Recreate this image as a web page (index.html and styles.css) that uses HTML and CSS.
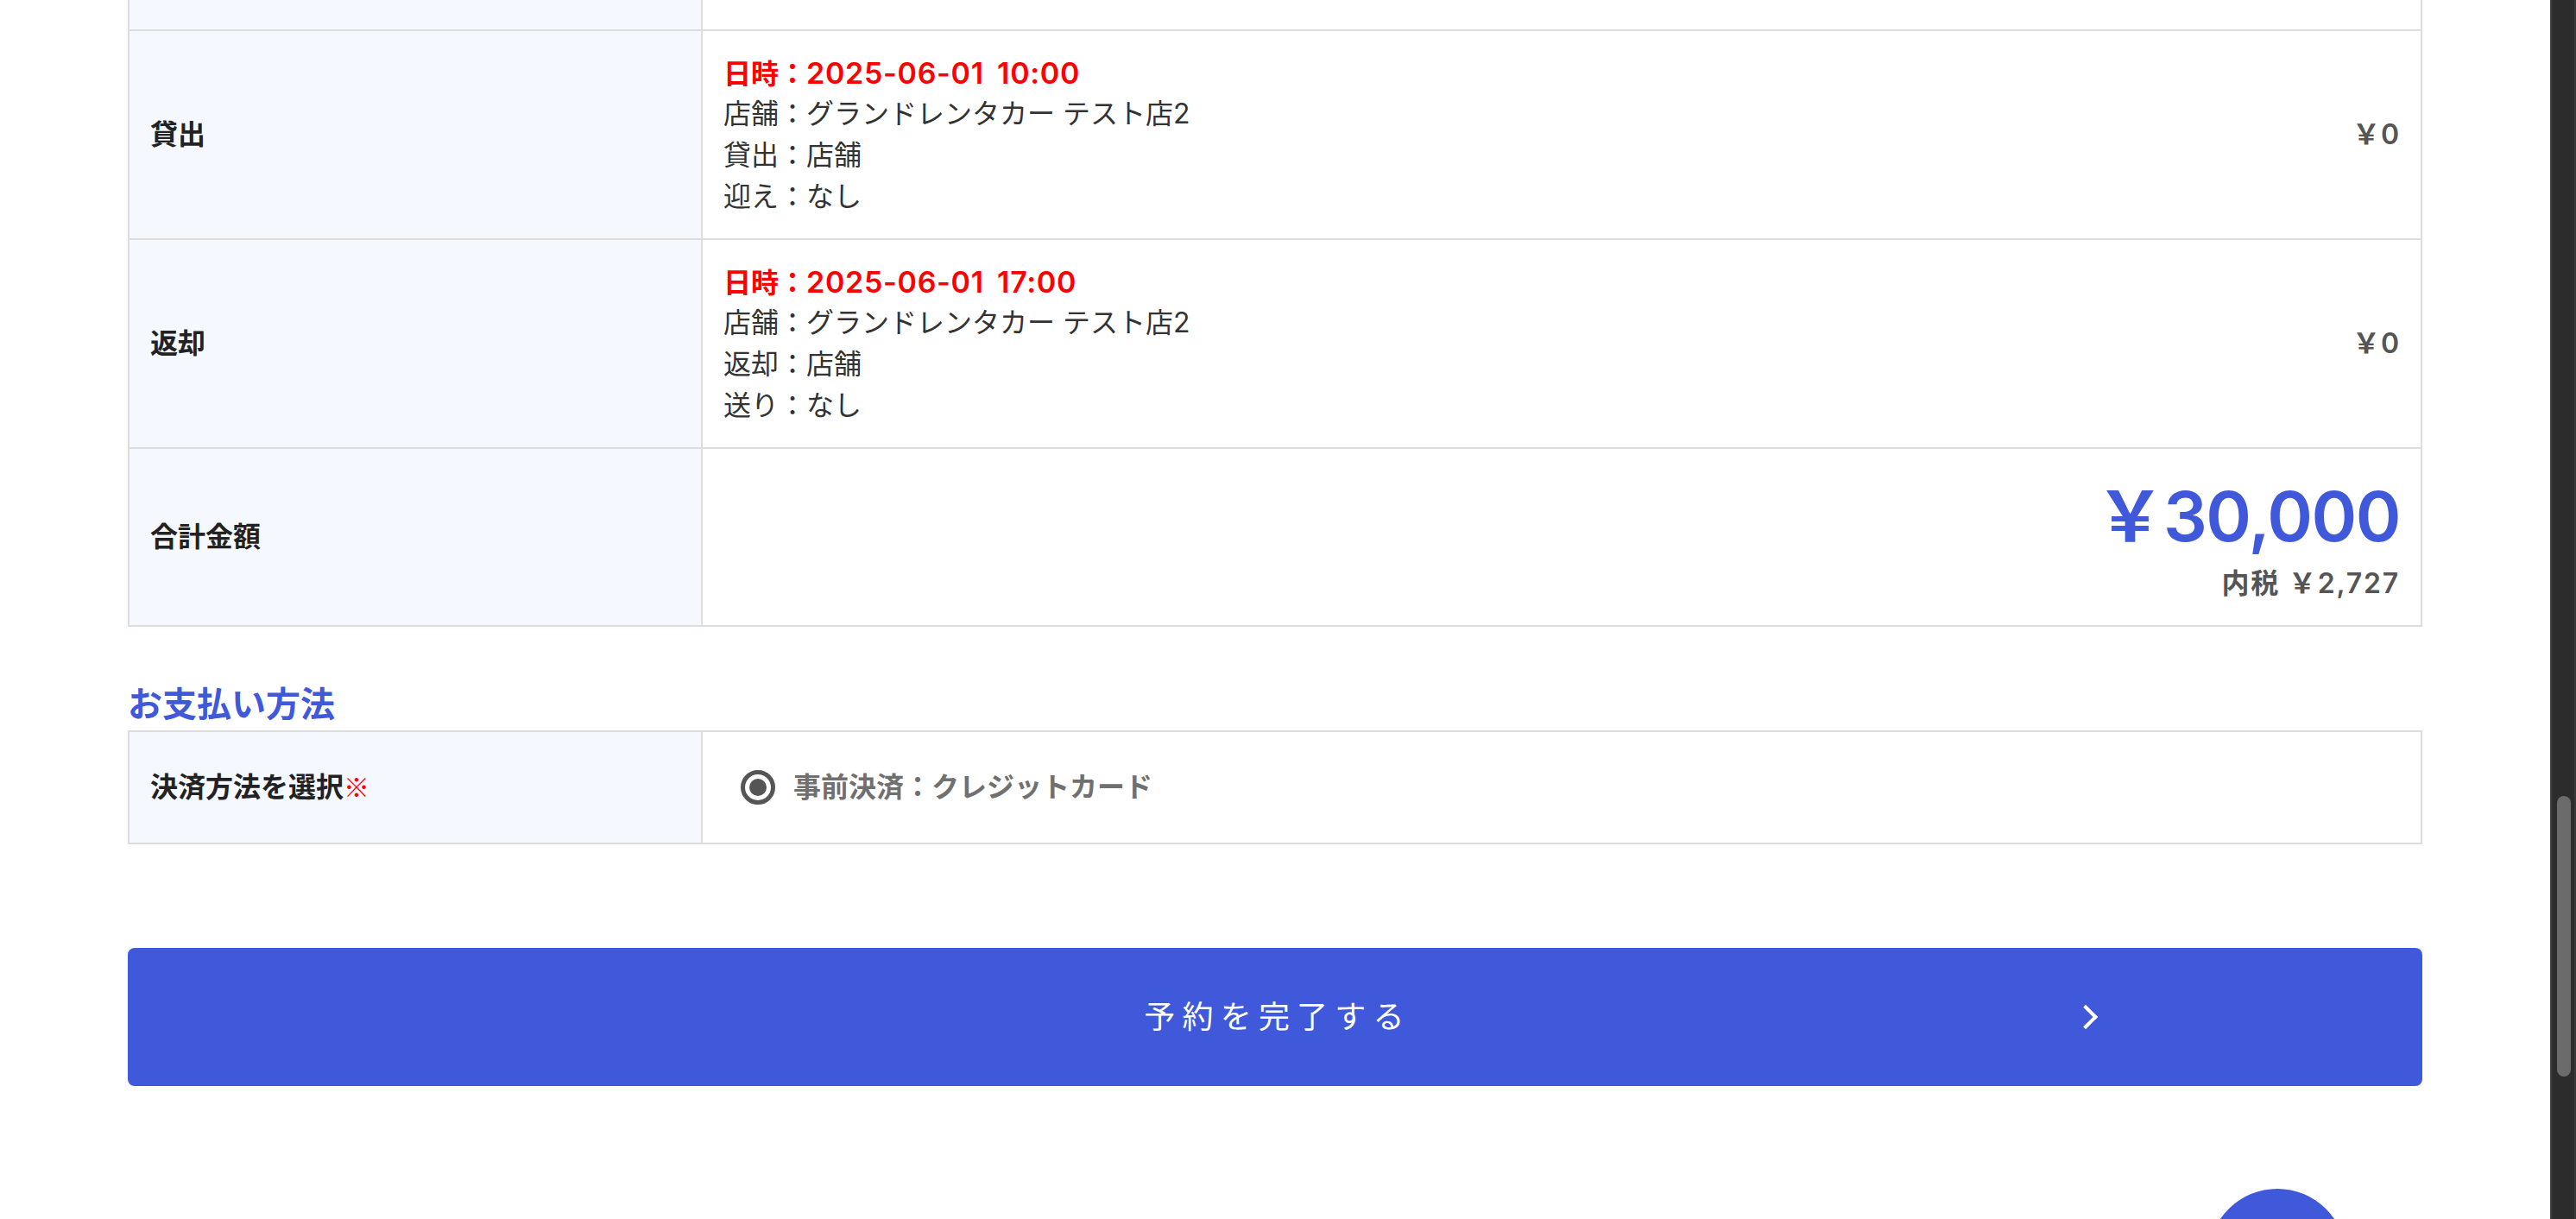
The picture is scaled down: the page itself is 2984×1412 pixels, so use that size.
FILE: index.html
```html
<!DOCTYPE html>
<html lang="ja">

<head>
    <meta charset="UTF-8">
    <meta name="viewport" content="width=device-width, initial-scale=1.0">
    <title>予約内容の確認</title>
    <link rel="stylesheet" href="styles.css">
</head>

<body>
    <main class="page">
        <table class="detail-table detail-table-top">
            <tr class="row-cut">
                <th>基本料金</th>
                <td class="amount">￥30,000</td>
            </tr>
            <tr>
                <th>貸出</th>
                <td>
                    <div class="cell-split">
                        <div>
                            <p class="date">日時：<span class="date-value">2025-06-01 10:00</span></p>
                            <p>店舗：グランドレンタカー テスト店2</p>
                            <p>貸出：店舗</p>
                            <p>迎え：なし</p>
                        </div>
                        <span class="price">￥0</span>
                    </div>
                </td>
            </tr>
            <tr>
                <th>返却</th>
                <td>
                    <div class="cell-split">
                        <div>
                            <p class="date">日時：<span class="date-value">2025-06-01 17:00</span></p>
                            <p>店舗：グランドレンタカー テスト店2</p>
                            <p>返却：店舗</p>
                            <p>送り：なし</p>
                        </div>
                        <span class="price">￥0</span>
                    </div>
                </td>
            </tr>
            <tr>
                <th>合計金額</th>
                <td class="amount">
                    <p class="total">￥30,000</p>
                    <p class="tax">内税 ￥2,727</p>
                </td>
            </tr>
        </table>

        <h2 class="section-title">お支払い方法</h2>
        <table class="detail-table">
            <tr>
                <th>決済方法を選択<span class="required">※</span></th>
                <td class="pay-cell">
                    <label class="radio-label">
                        <span class="radio"></span>
                        事前決済：クレジットカード
                    </label>
                </td>
            </tr>
        </table>

        <a class="submit-btn" href="#">予約を完了する<span class="chevron"></span></a>
    </main>

    <div class="scrollbar">
        <div class="scrollbar-thumb"></div>
    </div>

    <div class="float-btn"></div>
</body>

</html>
```

FILE: styles.css
```css
* {
    box-sizing: border-box;
}

body {
    margin: 0;
    height: 1412px;
    overflow: hidden;
    display: flex;
    background-color: #fff;
    color: #333;
    font-family: Inter, "Noto Sans CJK JP", sans-serif;
    font-size: 32px;
    line-height: 48px;
}

p {
    margin: 0;
}

.page {
    flex: 1;
    padding: 0 148px;
}

.detail-table {
    width: 100%;
    border-collapse: collapse;
    table-layout: fixed;
}

.detail-table-top {
    margin-top: -64px;
}

.detail-table th,
.detail-table td {
    border: 2px solid #ddd;
    padding: 24px;
}

.detail-table th {
    width: 25%;
    background-color: #f5f8ff;
    color: #222;
    font-weight: 700;
    text-align: left;
}

.detail-table .row-cut th,
.detail-table .row-cut td {
    height: 98px;
    padding: 21px 24px 27px;
    color: #555;
}

.cell-split {
    display: flex;
    justify-content: space-between;
    align-items: center;
}

.date {
    height: 48px;
    color: #f00;
    font-weight: 600;
    line-height: 51px;
}

.date-value {
    font-size: 34px;
    line-height: 1;
    letter-spacing: 0.7px;
    word-spacing: 6px;
}

.amount,
.price {
    text-align: right;
    color: #555;
    font-weight: 600;
    letter-spacing: 1px;
}

.total {
    color: #4059da;
    font-size: 80px;
    line-height: 108px;
    letter-spacing: -1.5px;
}

.tax {
    color: #555;
    letter-spacing: 1.8px;
}

.section-title {
    margin: 60px 0 0;
    color: #4059da;
    font-size: 40px;
    line-height: 60px;
    font-weight: 700;
}

.required {
    color: #f00;
    font-family: "Noto Sans CJK JP", sans-serif;
    font-size: 30px;
    line-height: 1;
    font-weight: 400;
}

.detail-table .pay-cell {
    padding: 40px 44px;
}

.radio-label {
    display: flex;
    align-items: center;
    gap: 21px;
    color: #707070;
    font-weight: 700;
}

.radio {
    width: 40px;
    height: 40px;
    border: 5px solid #555;
    border-radius: 50%;
    display: flex;
    align-items: center;
    justify-content: center;
}

.radio::after {
    content: "";
    width: 20px;
    height: 20px;
    border-radius: 50%;
    background-color: #555;
}

.submit-btn {
    position: relative;
    display: block;
    margin-top: 120px;
    padding-left: 6px;
    height: 160px;
    line-height: 160px;
    border-radius: 8px;
    background-color: #4059da;
    color: #fff;
    font-size: 36px;
    letter-spacing: 8.2px;
    text-align: center;
    text-decoration: none;
}

.chevron {
    position: absolute;
    top: 70px;
    right: 380px;
    width: 20px;
    height: 20px;
    border-top: 4px solid #fff;
    border-right: 4px solid #fff;
    transform: rotate(45deg);
}

.scrollbar {
    width: 30px;
    height: 100%;
    padding: 922px 4px 0 6px;
    background-color: #2c2c2c;
    border-left: 2px solid #3f3f3f;
    border-right: 2px solid #383838;
}

.scrollbar-thumb {
    width: 16px;
    height: 325px;
    border-radius: 8px;
    background-color: #6b6b6b;
}

.float-btn {
    position: fixed;
    top: 1377px;
    left: 2558px;
    width: 160px;
    height: 160px;
    border-radius: 50%;
    background-color: #4059da;
}
```
